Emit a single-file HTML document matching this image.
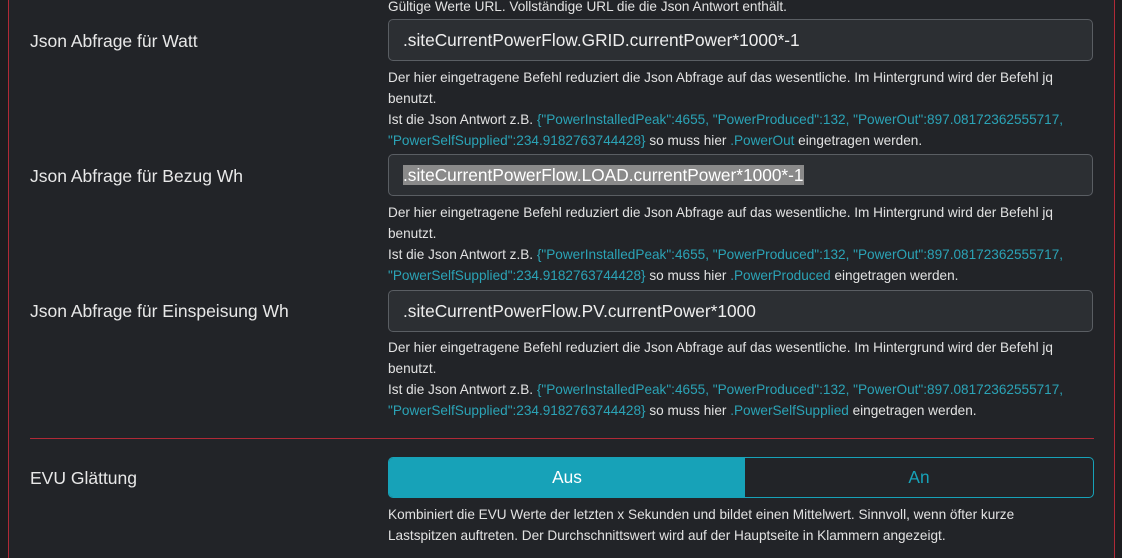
<!DOCTYPE html>
<html><head><meta charset="utf-8"><style>
html,body{margin:0;width:1122px;height:558px;overflow:hidden}
body{background:#1c1d20;font-family:"Liberation Sans",sans-serif;color:#e6e6e6;position:relative}
.card{position:absolute;left:8px;top:-10px;width:1105px;height:568px;background:#222428;border-left:1px solid #b02a37;border-right:1px solid #b02a37}
.lbl{position:absolute;left:30px;font-size:17.5px;color:#e8e8e8}
.inp{position:absolute;left:388px;width:705px;height:42px;border:1px solid #5a5e63;border-radius:5px;background:#2c2f33;font-size:17.3px;line-height:40px;padding-left:14px;box-sizing:border-box;color:#eee}
.help{position:absolute;left:388px;width:700px;font-size:13.6px;line-height:21px;color:#e2e2e2}
.t{color:#2ba3b6}
.sel{background:#8a8a8a;color:#fff}
</style></head><body>
<div class="card"></div>
<div class="help" style="top:-4px">Gültige Werte URL. Vollständige URL die die Json Antwort enthält.</div>
<div class="lbl" style="top:31px">Json Abfrage für Watt</div>
<div class="inp" style="top:19px">.siteCurrentPowerFlow.GRID.currentPower*1000*-1</div>
<div class="help" style="top:67px">Der hier eingetragene Befehl reduziert die Json Abfrage auf das wesentliche. Im Hintergrund wird der Befehl jq benutzt.<br>Ist die Json Antwort z.B. <span class="t">{"PowerInstalledPeak":4655, "PowerProduced":132, "PowerOut":897.08172362555717, "PowerSelfSupplied":234.9182763744428}</span> so muss hier <span class="t">.PowerOut</span> eingetragen werden.</div>
<div class="lbl" style="top:166px">Json Abfrage für Bezug Wh</div>
<div class="inp" style="top:154px"><span class="sel">.siteCurrentPowerFlow.LOAD.currentPower*1000*-1</span></div>
<div class="help" style="top:202px">Der hier eingetragene Befehl reduziert die Json Abfrage auf das wesentliche. Im Hintergrund wird der Befehl jq benutzt.<br>Ist die Json Antwort z.B. <span class="t">{"PowerInstalledPeak":4655, "PowerProduced":132, "PowerOut":897.08172362555717, "PowerSelfSupplied":234.9182763744428}</span> so muss hier <span class="t">.PowerProduced</span> eingetragen werden.</div>
<div class="lbl" style="top:301px">Json Abfrage für Einspeisung Wh</div>
<div class="inp" style="top:290px">.siteCurrentPowerFlow.PV.currentPower*1000</div>
<div class="help" style="top:337px">Der hier eingetragene Befehl reduziert die Json Abfrage auf das wesentliche. Im Hintergrund wird der Befehl jq benutzt.<br>Ist die Json Antwort z.B. <span class="t">{"PowerInstalledPeak":4655, "PowerProduced":132, "PowerOut":897.08172362555717, "PowerSelfSupplied":234.9182763744428}</span> so muss hier <span class="t">.PowerSelfSupplied</span> eingetragen werden.</div>
<div style="position:absolute;left:30px;top:438px;width:1064px;height:1px;background:#b02a37"></div>
<div class="lbl" style="top:468px">EVU Glättung</div>
<div style="position:absolute;left:388px;top:457px;width:706px;height:41px;border:1px solid #17a2b8;border-radius:5px;box-sizing:border-box;display:flex;overflow:hidden;font-size:17.3px">
<div style="width:356px;background:#17a2b8;color:#fff;text-align:center;line-height:39px">Aus</div>
<div style="flex:1;color:#17a2b8;text-align:center;line-height:39px">An</div></div>
<div class="help" style="top:504px;width:670px">Kombiniert die EVU Werte der letzten x Sekunden und bildet einen Mittelwert. Sinnvoll, wenn öfter kurze Lastspitzen auftreten. Der Durchschnittswert wird auf der Hauptseite in Klammern angezeigt.</div>
</body></html>
